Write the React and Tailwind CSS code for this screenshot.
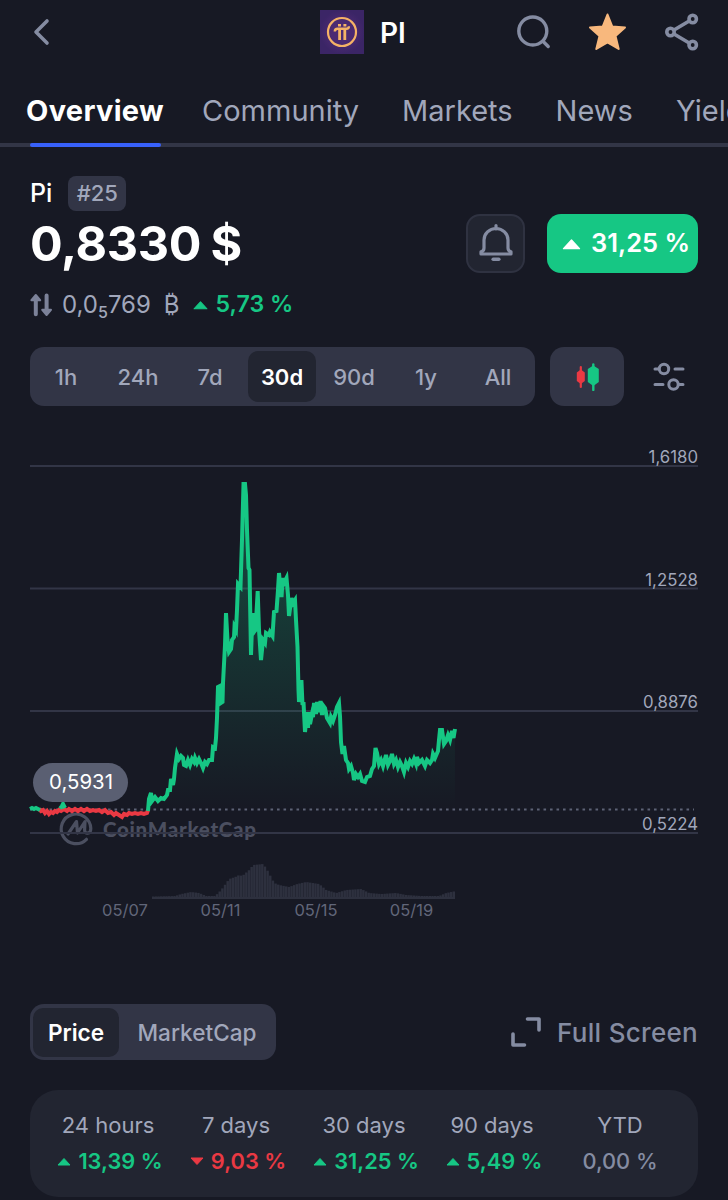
const FONT = "font-['Inter',sans-serif]";

const tabs = ["Community", "Markets", "News", "Yield"];
const ranges = ["1h", "24h", "7d", "30d", "90d", "1y", "All"];

const performance = [
  { label: "24 hours", value: "13,39 %", dir: "up" },
  { label: "7 days", value: "9,03 %", dir: "down" },
  { label: "30 days", value: "31,25 %", dir: "up" },
  { label: "90 days", value: "5,49 %", dir: "up" },
  { label: "YTD", value: "0,00 %", dir: "flat" },
];

const dirStyle = {
  up: "pl-[4px] font-semibold text-[#16c784]",
  down: "pl-[4px] font-semibold text-[#ea3943]",
  flat: "font-medium text-[#858ca2]",
};

const gridLines = [
  { y: 466, label: "1,6180" },
  { y: 588.5, label: "1,2528" },
  { y: 711, label: "0,8876" },
  { y: 833, label: "0,5224" },
];

const dates = [
  { x: 125, label: "05/07" },
  { x: 220.5, label: "05/11" },
  { x: 316, label: "05/15" },
  { x: 411.5, label: "05/19" },
];

const BASELINE = 809.5;

const redLine =
  "39,809 41,811 43,810 45,813 47,811 49,814 51,812 53,813 55,811 57,812 59,810 61,811 64,809 67,811 69,809 72,811 75,809 78,811 81,809 84,811 87,809 90,811 93,810 96,811 99,810 102,812 105,810 108,813 111,812 114,815 116,813 119,815 122,817 124,814 127,815 129,813 132,814 135,813 138,814 141,813 144,814 147,813 148,810";

const greenLine =
  "148,811 149,799 151,793 152,801 155,797 158,801 161,798 164,799 167,795 168,790 170,790 171,779 173,785 174,779 175,768 177,754 179,759 181,756 183,758 184,765 186,766 188,760 190,765 192,759 194,762 195,758 197,763 199,759 201,763 203,768 205,762 207,764 209,760 212,760 213,747 215,748 216,738 217,718 218,687 220,686 221,703 222.5,702 223,683 225,645 226,613 227.5,640 229,652 231,649 232,640 234,637 234.5,627 236,630 237,610 238,584 240.5,587 242,540 243.5,484 245,484 246,495 247,530 248.5,568 249.5,570 251,655 252.5,613 254,632 255.5,630 257.7,591 259,630 261,660 263,640 265,643 266,633 269,635 270,632 272.5,636 274,612 276.5,611 278,590 279,573 280.5,590 281.5,597 282.7,578 284,583 286.5,578 288,595 289,616 291.5,598 293,603 295,600 296,620 297.5,647 298.5,690 299,702 300.5,682 301.5,682 302.5,705 303.5,702 305,732 307,712 308,728 309,712 310,724 312,714 313,717 314,703 316,714 317,702 319,712 320.5,701 322,715 323.5,706 325,708 327,718 330,723 331,717 333,721 335,715 337,707 339,703 340,716 341,742 342.5,754 344,746 346,760 348,763 349,769 351,766 353,773 354,780 356,774 358,777 360,774 362,781 365,782 367,777 370,776 372,769 374,766 375.5,748 377,753 379,764 381,760 383,766 386,755 388,765 390,761 392,754 394,764 396,760 398,767 400,762 402,766 404,772 406,763 408,767 410,761 412,764 414,759 416,764 417,757 419,763 422,760 425,766 427,760 430,763 432,760 433,754 435,758 438,751 439,740 440,730 442,730 444,744 446,741 448,735 450,740 452,731 453.5,738 455,729";

const volume = [
  [152, 896.5], [174, 896], [180, 894], [190, 892], [198, 893], [205, 896], [214, 896],
  [220, 890], [228, 879], [234, 877], [238, 875], [241, 876], [248, 870], [252, 865],
  [262, 864], [266, 870], [273, 883], [278, 885], [288, 887], [296, 884], [305, 882],
  [318, 884], [325, 890], [335, 893], [345, 890], [360, 889], [368, 893], [380, 894],
  [395, 893], [405, 895], [420, 896], [438, 896], [445, 893], [455, 891],
];

function volumeAt(x) {
  const i = Math.max(1, volume.findIndex((p) => p[0] >= x));
  const [x0, y0] = volume[i - 1];
  const [x1, y1] = volume[i];
  return y0 + ((x - x0) / (x1 - x0)) * (y1 - y0);
}

const bars = Array.from({ length: 114 }, (_, i) => 152 + i * 2.66);

function Triangle({ down, className }) {
  return (
    <svg viewBox="0 0 14 9" className={className} fill="currentColor" stroke="currentColor" strokeLinejoin="round">
      <path d={down ? "M1 1H13L7 7.5Z" : "M1 8H13L7 1.5Z"} />
    </svg>
  );
}

function PiLogo() {
  return (
    <svg width="44" height="44" viewBox="0 0 44 44">
      <defs>
        <radialGradient id="pi-bg">
          <stop offset="0.5" stopColor="#4b2a72" />
          <stop offset="1" stopColor="#3b2566" />
        </radialGradient>
      </defs>
      <rect width="44" height="44" fill="url(#pi-bg)" />
      <g fill="none" stroke="#f5b266">
        <circle cx="22" cy="22" r="14" strokeWidth="2.2" />
        <path d="M14.8 21.5C14.8 19.3 16 18.8 17.5 18.8H26.5C28 18.8 28.9 18 28.9 16.2" strokeWidth="2.4" />
        <path d="M19.6 19V30M24.8 19V30" strokeWidth="2.8" />
        <path d="M18 15.2H21M23.4 15.2H26.4" strokeWidth="2.4" />
      </g>
    </svg>
  );
}

function Header() {
  return (
    <header className="flex h-[64px] items-center text-[#858ca2]">
      <svg className="ml-[30px] h-8 w-6" viewBox="0 0 24 32" fill="none" stroke="currentColor" strokeWidth="3.6" strokeLinecap="round" strokeLinejoin="round">
        <path d="M17 5L6 16L17 27" />
      </svg>
      <div className="ml-[266px] flex items-center gap-4">
        <PiLogo />
        <span className="pt-px text-[28px] font-semibold text-white">PI</span>
      </div>
      <div className="mr-[28px] ml-auto flex items-center gap-[36px]">
        <svg width="36" height="36" viewBox="0 0 36 36" fill="none" stroke="currentColor" strokeWidth="3.4" strokeLinecap="round">
          <circle cx="16.8" cy="17" r="14" />
          <path d="M27.2 27.5L32.2 32.5" />
        </svg>
        <svg width="40" height="40" viewBox="0 0 40 40" fill="#f8b87d" stroke="#f8b87d" strokeWidth="2" strokeLinejoin="round">
          <path d="M19.5 2.5L24.3 14.5L37 15.5L27.5 24L30.7 37L19.5 30.3L8.3 37L11.5 24L2 15.5L14.7 14.5Z" />
        </svg>
        <svg width="36" height="40" viewBox="0 0 36 40" fill="none" stroke="currentColor" strokeWidth="3.6">
          <circle cx="6.5" cy="20" r="3.7" />
          <circle cx="28.7" cy="7" r="3.7" />
          <circle cx="28.7" cy="33" r="3.7" />
          <path d="M10 18L25.2 9M10 22L25.2 31" />
        </svg>
      </div>
    </header>
  );
}

function Tabs() {
  return (
    <nav className="flex h-[83px] gap-[43px] overflow-hidden pl-[26px] text-[29px] whitespace-nowrap text-[#a1a7bb] shadow-[inset_0_-4px_0_#323546]">
      <div className="mr-[-5px] flex w-[138px] shrink-0 flex-col justify-between pt-[25px] font-bold text-white">
        <span className="leading-[44px] tracking-[0.3px]">Overview</span>
        <span className="ml-[4px] h-[4px] w-[131px] rounded-full bg-[#3861fb]" />
      </div>
      {tabs.map((tab) => (
        <span key={tab} className="shrink-0 pt-[25px] leading-[44px]">
          {tab}
        </span>
      ))}
    </nav>
  );
}

function Summary() {
  return (
    <section className="px-[30px] pt-[29px]">
      <div className="flex h-[35px] items-center gap-4">
        <span className="pt-px text-[25px] font-medium text-white">Pi</span>
        <span className="flex h-[35px] w-[58px] items-center justify-center rounded-lg bg-[#323546] text-[22px] font-medium text-[#a1a7bb]">
          #25
        </span>
      </div>
      <div className="mt-[3px] flex h-[58px] items-center">
        <span className="pt-[2px] text-[48.5px] font-bold tracking-[-0.3px] text-white [word-spacing:-2px]">0,8330 $</span>
        <button className="ml-auto flex h-[59px] w-[59px] items-center justify-center rounded-[14px] border-2 border-[#2f3241] bg-[#222531] text-[#858ca2]">
          <svg width="36" height="40" viewBox="0 0 36 40" fill="none" stroke="currentColor" strokeWidth="3.2" strokeLinecap="round" strokeLinejoin="round">
            <path d="M18 2.5V6M3 31H33V28.8C31.2 28.3 30 27 30 25V17A12 11.5 0 0 0 6 17V25C6 27 4.8 28.3 3 28.8Z" />
            <path d="M15.2 36.3H20.8" strokeWidth="3.6" />
          </svg>
        </button>
        <div className="ml-[22px] flex h-[59px] w-[151px] items-center rounded-[14px] bg-[#16c784] pt-px pl-[15px] text-[25.5px] font-semibold whitespace-nowrap text-white">
          <Triangle className="mr-[10px] h-[12px] w-[19px] shrink-0" />
          31,25 %
        </div>
      </div>
      <div className="mt-[15px] flex h-[35px] items-center text-[24px] text-[#a1a7bb]">
        <svg width="23" height="24" viewBox="0 0 23 24" fill="none" stroke="#7c8299" strokeWidth="4" strokeLinecap="round" strokeLinejoin="round">
          <path d="M5.8 21.2V5M16.6 2.5V19" />
          <path d="M1.4 7.2L5.8 2L10.2 7.2ZM12.2 16.8L16.6 22L21 16.8Z" strokeWidth="2" fill="#7c8299" />
        </svg>
        <span className="ml-[9px]">
          0,0<span className="relative top-[5px] text-[16px] font-medium">5</span>769
        </span>
        <span className="ml-[13px]">₿</span>
        <Triangle className="ml-[13px] h-[10px] w-[15px] text-[#16c784]" />
        <span className="ml-[8px] text-[23.2px] font-semibold text-[#16c784]">5,73 %</span>
      </div>
    </section>
  );
}

function RangeBar() {
  return (
    <section className="mt-[25px] flex h-[59px] items-center px-[30px]">
      <div className="flex h-[59px] w-[505px] items-center rounded-[14px] bg-[#323546] text-[22px] font-medium text-[#a1a7bb]">
        {ranges.map((label) => (
          <div key={label} className="flex h-[51px] w-[72px] items-center justify-center">
            {label === "30d" ? (
              <span className="flex h-[51px] w-[68px] items-center justify-center rounded-[10px] bg-[#222531] pt-px font-semibold text-white">
                {label}
              </span>
            ) : (
              <span className="pt-px">{label}</span>
            )}
          </div>
        ))}
      </div>
      <button className="ml-[15px] flex h-[59px] w-[74px] items-center justify-center rounded-[14px] bg-[#323546]">
        <svg width="24" height="28" viewBox="0 0 24 28">
          <path d="M5.8 4V24" stroke="#ea3943" strokeWidth="2.2" strokeLinecap="round" />
          <path d="M5.8 6.5L9.8 9.5V18L5.8 21L1.8 18V9.5Z" fill="#ea3943" />
          <path d="M18.3 1.5V27" stroke="#16c784" strokeWidth="2.4" strokeLinecap="round" />
          <path d="M18.3 2.5L23.8 6V19L18.3 23L12.8 19V6Z" fill="#16c784" />
        </svg>
      </button>
      <svg className="ml-[28px]" width="34" height="30" viewBox="0 0 34 30" fill="none" stroke="#858ca2" strokeWidth="3" strokeLinecap="round">
        <circle cx="12" cy="7" r="4.7" />
        <circle cx="21.5" cy="22.5" r="4.7" />
        <path d="M3 7H6.5M23 7H31M3 22.5H11M27 22.5H31" />
      </svg>
    </section>
  );
}

function PriceChart() {
  return (
    <svg className="block" width="728" height="514" viewBox="0 406 728 514" fontFamily="Inter, sans-serif">
      <defs>
        <linearGradient id="area" gradientUnits="userSpaceOnUse" x1="0" x2="0" y1="484" y2="809">
          <stop offset="0" stopColor="#16c784" stopOpacity="0.3" />
          <stop offset="1" stopColor="#16c784" stopOpacity="0" />
        </linearGradient>
      </defs>

      {gridLines.map(({ y, label }) => (
        <g key={label}>
          <path d={`M30 ${y}H698`} stroke="#323546" strokeWidth="2" />
          <text x="698" y={y - 3} textAnchor="end" fontSize="16.8" fill="#a1a7bb">{label}</text>
        </g>
      ))}

      {/* Watermark */}
      <g stroke="#4b4f60" fill="none" strokeWidth="3.2" strokeLinecap="round" strokeLinejoin="round">
        <path d="M86.5 839.3A14.8 14.8 0 1 1 90.8 828.5C90.8 834.5 84.4 834.5 84.6 830L85 821.5L77.5 833L76.5 821.5L68 834" />
      </g>
      <text x="103" y="836.5" fontSize="20.5" fontWeight="900" fontFamily="Lato, sans-serif" fill="#4b4f60" textLength="153">CoinMarketCap</text>
      <path d="M30 833H258" stroke="#323546" strokeWidth="2" />

      <path d={`M30 ${BASELINE}H694`} stroke="#5d6275" strokeWidth="1.8" strokeDasharray="2.6 3.9" />

      <polygon points={`148,${BASELINE} ${greenLine} 455,${BASELINE}`} fill="url(#area)" />
      <g fill="none" strokeWidth="4">
        <polyline points={redLine} stroke="#ea3943" />
        <polyline points="30,809 32,808 34,809 36,808 40,810" stroke="#16c784" />
        <polyline points="60,808.5 62,806 63,804 65,808" stroke="#16c784" />
        <polyline points={greenLine} stroke="#16c784" />
      </g>

      {/* Open price */}
      <rect x="33" y="763" width="95" height="39" rx="19.5" fill="#5a5f72" />
      <text x="81" y="789" textAnchor="middle" fontSize="20.4" fill="#fff">0,5931</text>

      {/* Volume */}
      {bars.map((x) => (
        <rect key={x} x={x} y={volumeAt(x)} width="2.45" height={899 - volumeAt(x)} fill="#2d303e" />
      ))}
      <path d="M152 898H455" stroke="#2d303e" strokeWidth="2" />
      {dates.map(({ x, label }) => (
        <text key={label} x={x} y="916" textAnchor="middle" fontSize="16.5" fill="#616679">{label}</text>
      ))}
    </svg>
  );
}

function ChartControls() {
  return (
    <section className="mt-[84px] flex h-[56px] items-center justify-between px-[30px]">
      <div className="flex h-[56px] w-[246px] items-center rounded-[14px] bg-[#323546] p-[3px] text-[22.6px] font-medium">
        <span className="flex h-[49px] w-[86px] items-center justify-center rounded-[10px] bg-[#222531] pt-px font-semibold text-white">
          Price
        </span>
        <span className="flex-1 pt-px pl-[2px] text-center text-[#a1a7bb]">MarketCap</span>
      </div>
      <div className="flex items-center gap-[15px] text-[#858ca2]">
        <svg width="32" height="32" viewBox="0 0 32 32" fill="none" stroke="currentColor" strokeWidth="3.6" strokeLinecap="round" strokeLinejoin="round">
          <path d="M17.5 3H29V14M3 18V29H14.5" />
        </svg>
        <span className="text-[26px] font-medium tracking-[0.3px]">Full Screen</span>
      </div>
    </section>
  );
}

function Performance() {
  return (
    <section className="mx-[30px] mt-[30px] flex h-[107px] rounded-[28px] bg-[#222531] px-[14px]">
      {performance.map(({ label, value, dir }) => (
        <div key={label} className="flex flex-1 flex-col items-center whitespace-nowrap">
          <div className="mt-[18px] flex h-[34px] items-center text-[22px] text-[#a1a7bb]">{label}</div>
          <div className={`mt-[2px] flex h-[34px] items-center text-[21.8px] ${dirStyle[dir]}`}>
            {dir !== "flat" && <Triangle down={dir === "down"} className="mr-[7px] h-[9px] w-[14px]" />}
            {value}
          </div>
        </div>
      ))}
    </section>
  );
}

export default function App() {
  return (
    <div className={`h-[1200px] w-[728px] overflow-hidden bg-[#171924] ${FONT}`}>
      <Header />
      <Tabs />
      <Summary />
      <RangeBar />
      <PriceChart />
      <ChartControls />
      <Performance />
    </div>
  );
}
